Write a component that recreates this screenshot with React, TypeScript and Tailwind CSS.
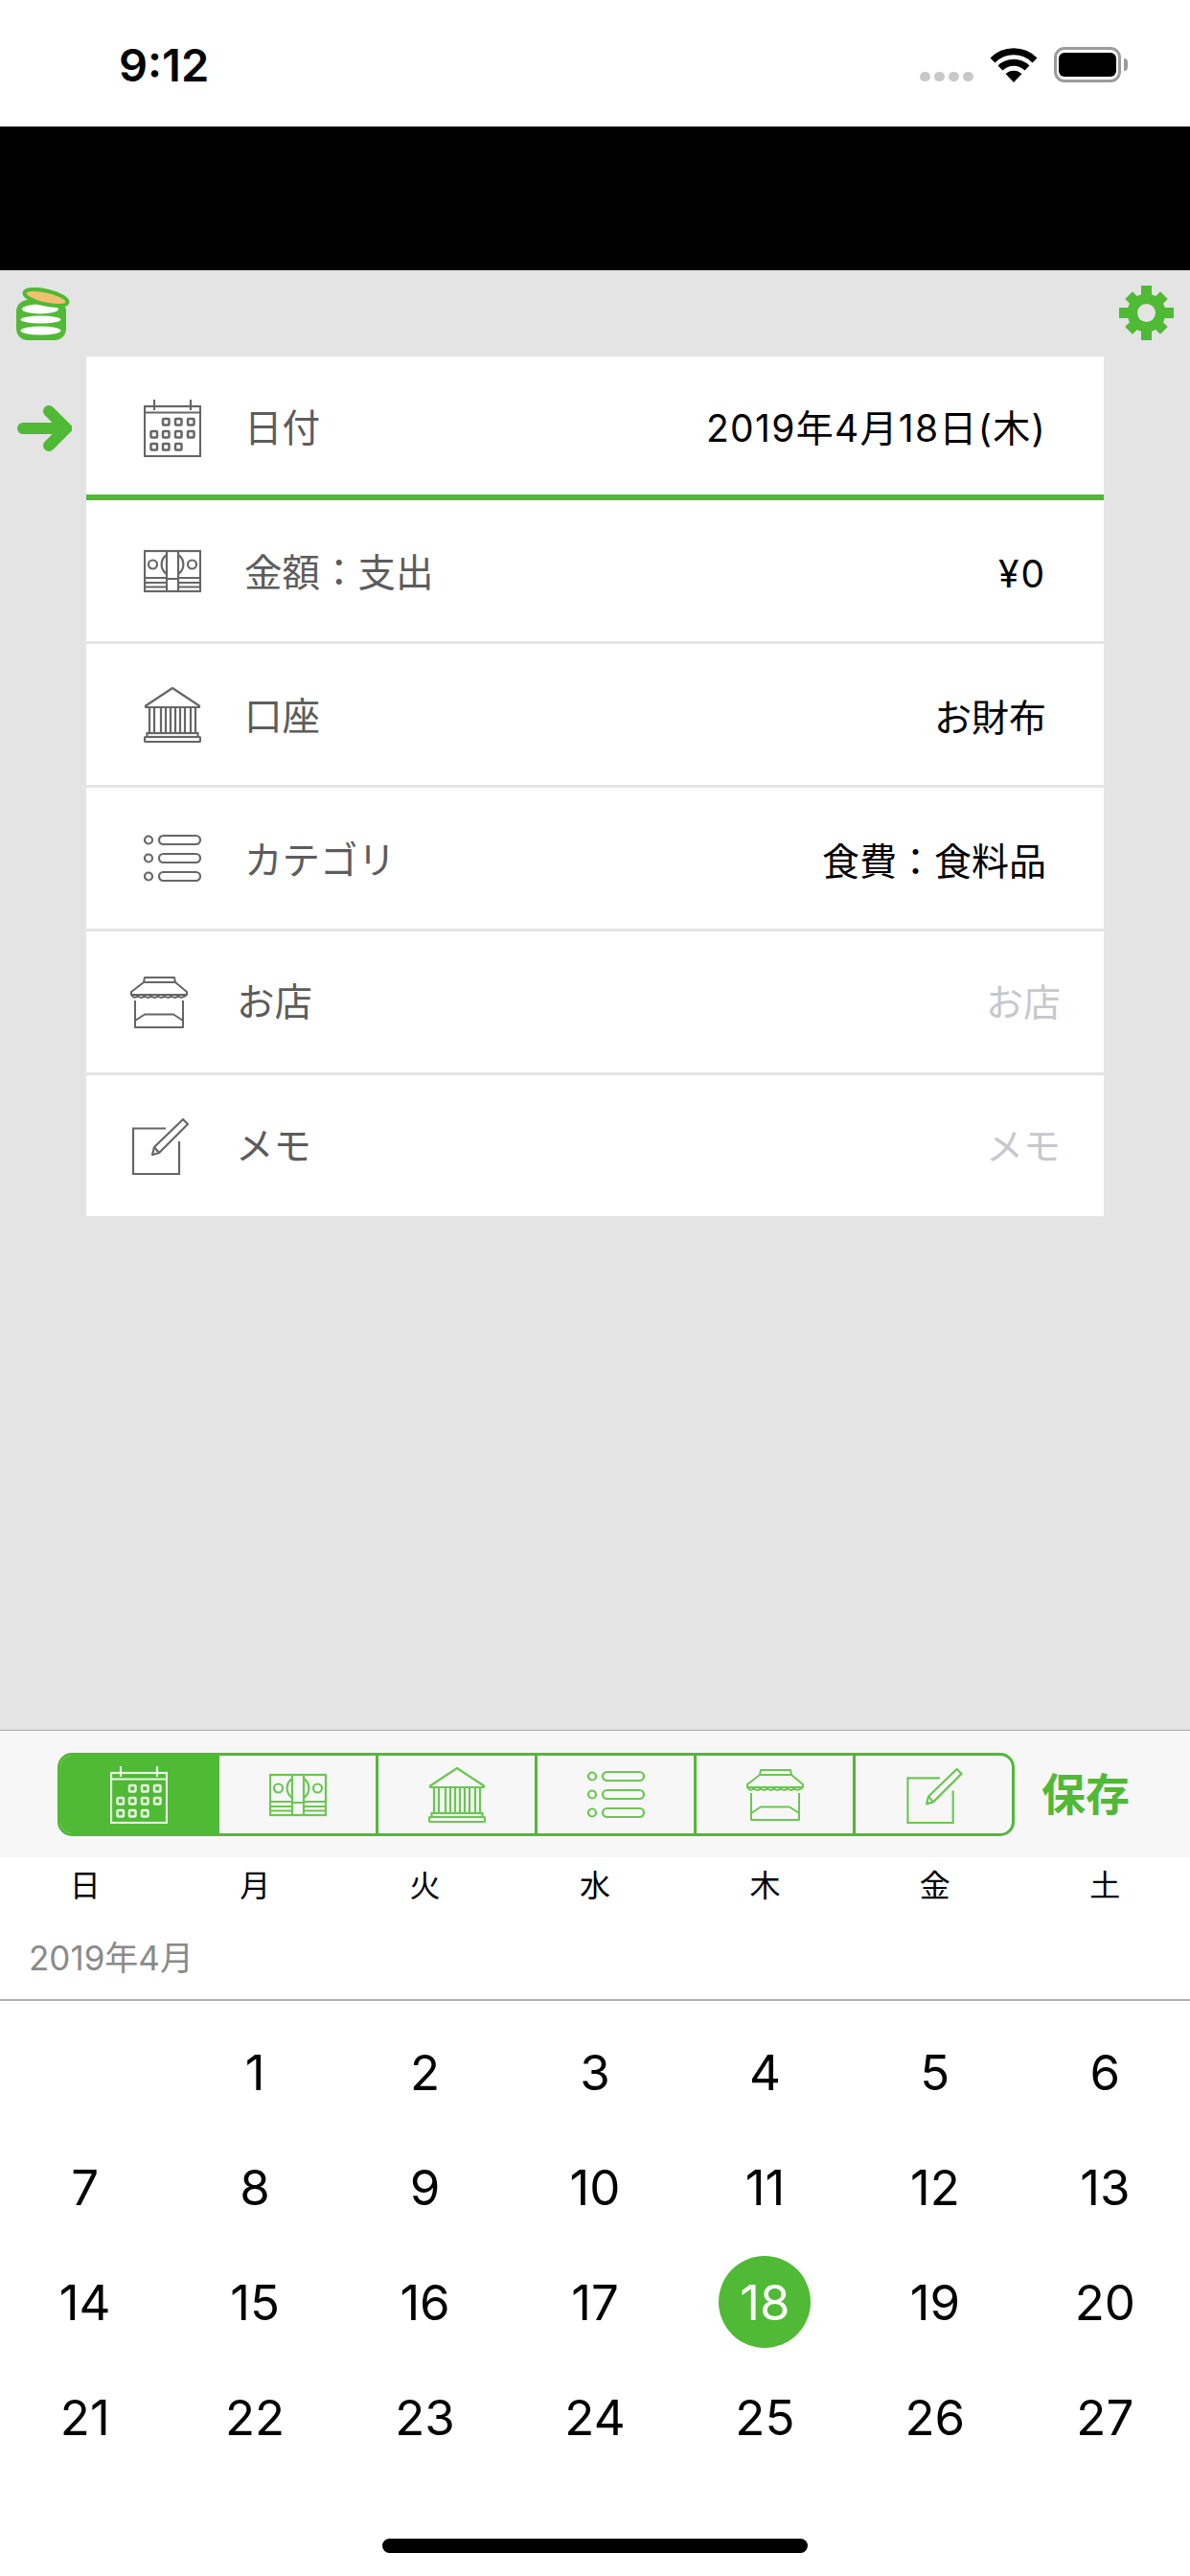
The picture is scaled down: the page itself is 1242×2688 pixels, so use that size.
import React from "react"

type IconProps = { className?: string }

function CalendarIcon({ className }: IconProps) {
  const cells = [
    [23, 20], [36, 20], [49, 20],
    [10.5, 33], [23, 33], [36, 33], [49, 33],
    [10.5, 46], [23, 46], [36, 46],
  ]
  return (
    <svg viewBox="0 0 60 60" fill="none" stroke="currentColor" strokeWidth="2.2" className={className}>
      <rect x="1" y="7" width="58" height="52" />
      <path d="M1 13.500H59M11 0V11M49 0V11" />
      {cells.map(([x, y]) => (
        <rect key={`${x}-${y}`} x={x - 3} y={y} width="6.500" height="6.500" rx="1" strokeWidth="2.500" />
      ))}
    </svg>
  )
}

function MoneyIcon({ className }: IconProps) {
  return (
    <svg viewBox="0 0 60 60" fill="none" stroke="currentColor" strokeWidth="2.200" className={className}>
      <rect x="1" y="9" width="58" height="42" />
      <path d="M24 9V51M36 9V51M24 38H36" />
      <circle cx="9.500" cy="23" r="4.500" />
      <circle cx="50.500" cy="23" r="4.500" />
      <path d="M24 13A12 12 0 0 0 24 33M36 13A12 12 0 0 1 36 33" />
      <path d="M1 37H24M36 37H59M1 42H24M36 42H59M1 46.500H24M36 46.500H59" />
    </svg>
  )
}

function BankIcon({ className }: IconProps) {
  return (
    <svg viewBox="0 0 60 60" fill="none" stroke="currentColor" strokeWidth="2.200" className={className}>
      <path d="M30 2L2 20.500V22H58V20.500Z" strokeLinejoin="round" />
      <path d="M6 22V49M11 22V49M18 22V49M23 22V49M28 22V49M33 22V49M38 22V49M43 22V49M49 22V49M54 22V49" />
      <rect x="3.500" y="49" width="53" height="4" />
      <rect x="1" y="53" width="58" height="5" rx="1" />
    </svg>
  )
}

function ListIcon({ className }: IconProps) {
  return (
    <svg viewBox="0 0 60 60" fill="none" stroke="currentColor" strokeWidth="2.200" className={className}>
      {[10.5, 29.5, 48.5].map((y) => (
        <g key={y}>
          <circle cx="5" cy={y} r="4" />
          <rect x="16" y={y - 4.5} width="43" height="9" rx="4.500" />
        </g>
      ))}
    </svg>
  )
}

function StoreIcon({ className }: IconProps) {
  return (
    <svg viewBox="0 0 60 60" fill="none" stroke="currentColor" strokeWidth="2" strokeLinejoin="round" className={className}>
      <path d="M15 4H46L47 9H14Z" />
      <path d="M14 9L1 19V22H59V19L47 9" />
      <path d="M1 22Q4 27 8 23Q11 27 15 23Q18 27 22 23Q25 27 29 23Q32 27 36 23Q39 27 43 23Q46 27 50 23Q53 27 59 22" />
      <path d="M5 28V56H55V28" />
      <path d="M5 49L15 42.500H45L55 49" />
    </svg>
  )
}

function MemoIcon({ className }: IconProps) {
  return (
    <svg viewBox="0 0 60 61" fill="none" stroke="currentColor" strokeWidth="2.200" className={className}>
      <path d="M36 12.500H2V60H50V26" />
      <path d="M22 40L24 32L54 3L59 8L29 38Z" strokeLinejoin="round" />
      <path d="M24 32L29 38" />
    </svg>
  )
}

function CoinLogo() {
  return (
    <svg viewBox="0 0 56 55" className="h-[55px] w-[56px]">
      <rect x="0" y="13" width="52" height="42" rx="12" fill="#50b935" />
      <ellipse cx="25" cy="22.500" rx="19" ry="5" fill="#fff" />
      <ellipse cx="25.500" cy="33.500" rx="21" ry="4" fill="#fff" />
      <ellipse cx="25.500" cy="45" rx="21" ry="4.500" fill="#fff" />
      <ellipse cx="31" cy="10.500" rx="23" ry="7" transform="rotate(13 31 10.500)" fill="#f0c070" stroke="#50b935" strokeWidth="4" />
    </svg>
  )
}

function Arrow() {
  return (
    <svg viewBox="0 0 57 48" fill="none" stroke="#50b935" strokeWidth="12" strokeLinecap="round" className="h-[48px] w-[57px]">
      <path d="M6 24H48" />
      <path d="M33 6L51 24L33 42" strokeLinejoin="miter" />
    </svg>
  )
}

function Gear() {
  return (
    <svg viewBox="0 0 57 57" className="h-[57px] w-[57px]">
      <g fill="#50b935">
        <rect x="23" y="0" width="11" height="57" />
        <rect x="0" y="23" width="57" height="11" />
        <rect x="23" y="2.500" width="11" height="52" transform="rotate(45 28.500 28.500)" />
        <rect x="23" y="2.500" width="11" height="52" transform="rotate(-45 28.500 28.500)" />
        <circle cx="28.500" cy="28.500" r="20" />
      </g>
      <circle cx="28.500" cy="28.500" r="9.500" fill="#e4e4e4" />
    </svg>
  )
}

function StatusBar() {
  return (
    <div className="flex h-[132px] items-start justify-between bg-white pr-[65px] pl-[124px]">
      <span className="mt-[39px] text-[47px] leading-[58px] font-semibold text-black">9:12</span>
      <div className="mt-[49px] flex items-end">
        <div className="mb-[1px] flex gap-[4px]">
          {[0, 1, 2, 3].map((i) => (
            <span key={i} className="h-[10px] w-[11px] rounded-full bg-[#c8c8c8]" />
          ))}
        </div>
        <svg viewBox="0 0 50 36" className="ml-[17px] h-[36px] w-[50px]">
          <path d="M3 13A31 31 0 0 1 47 13" fill="none" stroke="#000" strokeWidth="7" />
          <path d="M11 21A20 20 0 0 1 39 21" fill="none" stroke="#000" strokeWidth="7" />
          <path d="M25 36L16.500 27A12.500 12.500 0 0 1 33.500 27Z" fill="#000" />
        </svg>
        <div className="ml-[17px] flex items-center">
          <div className="flex h-[37px] w-[70px] items-center justify-center rounded-[11px] border-[3px] border-[#9b9b9b]">
            <div className="h-[25px] w-[60px] rounded-[6px] bg-black" />
          </div>
          <div className="ml-[3px] h-[13px] w-[4px] rounded-r-full bg-[#9b9b9b]" />
        </div>
      </div>
    </div>
  )
}

const rows = [
  { label: "日付", value: "2019年4月18日(木)", Icon: CalendarIcon, border: "border-b-[6px] border-[#50b935]", track: "tracking-[1.3px]", icon: "mt-[6px]" },
  { label: "金額：支出", value: "¥0", Icon: MoneyIcon, border: "border-b-[3px] border-[#e4e4e4]", track: "tracking-[2px]", icon: "" },
  { label: "口座", value: "お財布", Icon: BankIcon, border: "border-b-[3px] border-[#e4e4e4]", track: "", icon: "" },
  { label: "カテゴリ", value: "食費：食料品", Icon: ListIcon, border: "border-b-[3px] border-[#e4e4e4]", track: "", icon: "" },
]

function FormCard() {
  return (
    <div className="w-[1062px] bg-white">
      {rows.map(({ label, value, Icon, border, track, icon }) => (
        <div key={label} className={`flex h-[150px] items-center pr-[60px] pl-[60px] ${border}`}>
          <Icon className={`h-[60px] w-[60px] text-[#666666] ${icon}`} />
          <span className="ml-[45px] pt-[7px] text-[39.5px] text-[#5c5c5c]">{label}</span>
          <span className={`ml-auto pt-[7px] text-[39px] text-black ${track}`}>{value}</span>
        </div>
      ))}
      <div className="flex h-[150px] items-center border-b-[3px] border-[#e4e4e4] pr-[45px] pl-[46px]">
        <StoreIcon className="h-[60px] w-[60px] text-[#666666]" />
        <span className="ml-[51px] pt-[2px] text-[39.5px] text-[#5c5c5c]">お店</span>
        <span className="ml-auto pt-[2px] text-[39px] text-[#c7c7cd]">お店</span>
      </div>
      <div className="flex h-[147px] items-center pr-[45px] pl-[47px]">
        <MemoIcon className="h-[61px] w-[60px] text-[#666666]" />
        <span className="ml-[49px] pt-[2px] text-[39.5px] text-[#5c5c5c]">メモ</span>
        <span className="ml-auto pt-[2px] text-[39px] text-[#c7c7cd]">メモ</span>
      </div>
    </div>
  )
}

const tabs = [CalendarIcon, MoneyIcon, BankIcon, ListIcon, StoreIcon, MemoIcon]

function Toolbar() {
  return (
    <div className="flex h-[133px] items-start border-t border-[#a9a9a9] bg-[#f7f7f7] pt-[23px] pl-[60px]">
      <div className="flex h-[87px] w-[999px] overflow-hidden rounded-[15px] border-[3px] border-[#50b935]">
        {tabs.map((Icon, i) => (
          <div
            key={i}
            className={`flex flex-1 items-center justify-center ${i === 0 ? "bg-[#50b935] text-[#e8f6e3]" : "text-[#6cc653]"} ${i < 5 ? "border-r-[3px] border-[#50b935]" : ""}`}
          >
            <Icon className="h-[60px] w-[60px]" />
          </div>
        ))}
      </div>
      <span className="ml-[28px] text-[46px] leading-[87px] font-bold text-[#50b935]">保存</span>
    </div>
  )
}

const weekdays = ["日", "月", "火", "水", "木", "金", "土"]
const days = [null, ...Array.from({ length: 27 }, (_, i) => i + 1)]

function CalendarPicker() {
  return (
    <div className="bg-white">
      <div className="grid h-[60px] grid-cols-7 items-center">
        {weekdays.map((d) => (
          <span key={d} className="text-center text-[32px] leading-[40px] text-black">{d}</span>
        ))}
      </div>
      <div className="flex h-[90px] items-start border-b-2 border-[#b0b0b0] pl-[30px]">
        <span className="mt-[21px] text-[35px] leading-[48px] text-[#8a8a8a]">2019年4月</span>
      </div>
      <div className="grid grid-cols-7 pt-[14px]">
        {days.map((d, i) => (
          <div key={i} className="flex h-[120px] items-center justify-center">
            {d === 18 ? (
              <span className="flex h-[96px] w-[96px] items-center justify-center rounded-full bg-[#50b935] pt-[2px] text-[51px] text-white">18</span>
            ) : (
              <span className="pt-[2px] text-[51px] text-black">{d}</span>
            )}
          </div>
        ))}
      </div>
    </div>
  )
}

export default function App() {
  return (
    <div className="flex h-[2688px] w-[1242px] flex-col overflow-hidden bg-white font-['Inter','Noto_Sans_CJK_JP',sans-serif]">
      <StatusBar />
      <div className="h-[150px] bg-black" />
      <div className="flex flex-1 flex-col bg-[#e4e4e4]">
        <div className="flex h-[90px] items-start justify-between pt-[16px] pr-[17px] pl-[17px]">
          <div className="pt-[2px]"><CoinLogo /></div>
          <Gear />
        </div>
        <div className="flex items-start">
          <div className="w-[90px] pt-[51px] pl-[18px]"><Arrow /></div>
          <FormCard />
        </div>
      </div>
      <Toolbar />
      <CalendarPicker />
      <div className="flex h-[106px] justify-center bg-white pt-[67px]">
        <div className="h-[15px] w-[444px] rounded-full bg-black" />
      </div>
    </div>
  )
}
